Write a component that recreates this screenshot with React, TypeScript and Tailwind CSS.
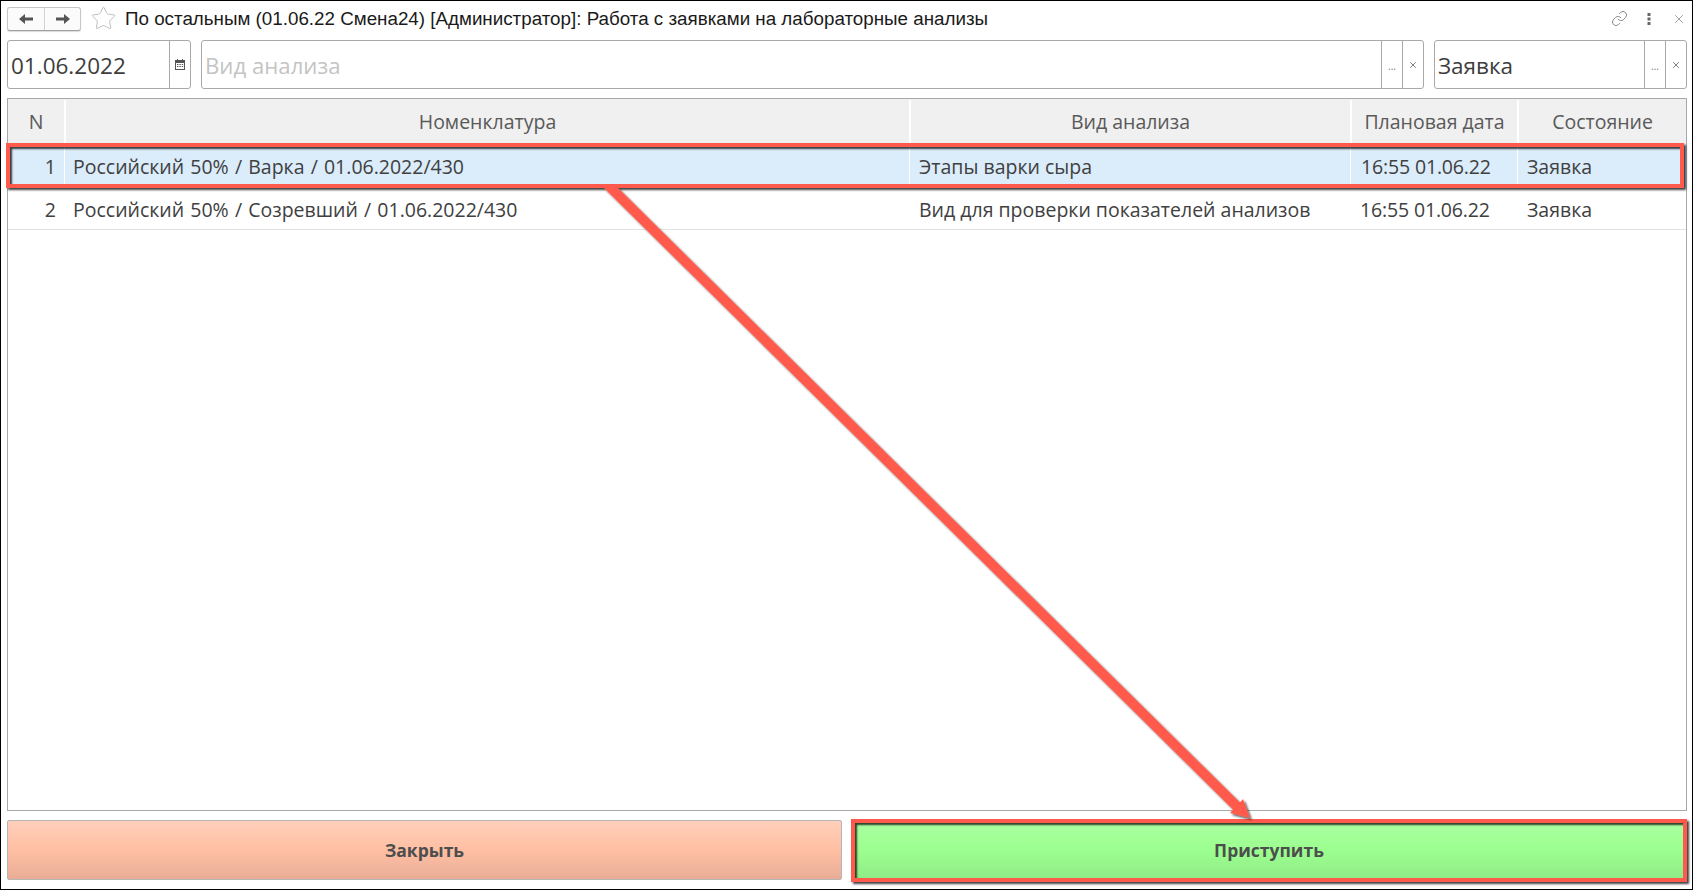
import { Star, Link, X } from "lucide-react";

const GRID = "grid grid-cols-[56px_845px_441px_167px_169px]";

function Field({ text, placeholder, width, trailing, grow }: { text: string; placeholder?: boolean; width?: string; trailing: "date" | "pick"; grow?: boolean }) {
  return (
    <div className={`flex h-[49px] rounded-[3px] border border-[#a9a9a9] bg-white ${width ?? ""} ${grow ? "flex-1" : ""}`}>
      <div className={`flex-1 flex items-center pl-[3px] pt-[2px] ${placeholder ? "text-[22.2px] text-[#c4c4c4]" : "text-[22.5px] text-[#3d3d3d]"}`}>{text}</div>
      {trailing === "date" ? (
        <div className="w-[21px] border-l border-[#a9a9a9] flex items-center justify-center">
          <svg width="10" height="11" viewBox="0 0 10 11" className="text-[#555]">
            <rect x="0.5" y="1.5" width="9" height="9" fill="none" stroke="currentColor" />
            <rect x="0.5" y="1.5" width="9" height="2.5" fill="currentColor" />
            <path d="M2.5 0v2M7.5 0v2" stroke="currentColor" />
            <path d="M2 5.5h1.4M4.4 5.5h1.4M6.8 5.5h1.4M2 7.5h1.4M4.4 7.5h1.4M6.8 7.5h1.4" stroke="currentColor" />
          </svg>
        </div>
      ) : (
        <>
          <div className="w-[21px] border-l border-[#a9a9a9] flex items-center justify-center text-[10px] text-[#777] pt-[3px]">...</div>
          <div className="w-[21px] border-l border-[#a9a9a9] flex items-center justify-center">
            <X size={10} strokeWidth={2} className="text-[#666]" />
          </div>
        </>
      )}
    </div>
  );
}

function Frame({ className }: { className: string }) {
  return (
    <div className={`absolute border-[4px] border-[#ff5a4c] pointer-events-none shadow-[2px_2px_2px_rgba(0,0,0,0.75),inset_2px_2px_2px_rgba(0,0,0,0.75)] ${className}`} />
  );
}

export default function App() {
  return (
    <div className="relative w-[1693px] h-[890px] overflow-hidden bg-white border border-black flex flex-col pl-[6px] pr-[5px] font-['Open_Sans',sans-serif] text-[#404040]">
      {/* Title bar */}
      <div className="h-[39px] flex items-center pb-[4px] shrink-0">
        <div className="flex h-[24px] w-[74px] rounded-[3px] border border-[#c6c6c6] border-b-[#a0a0a0] bg-[#fbfbfb] shadow-[0_1px_1px_rgba(0,0,0,0.15)]">
          <div className="w-[37px] flex items-center justify-center border-r border-[#d4d4d4]">
            <svg width="14" height="10" viewBox="0 0 14 10"><polygon points="0,5 6,0 6,3.5 14,3.5 14,6.5 6,6.5 6,10" fill="#555" /></svg>
          </div>
          <div className="flex-1 flex items-center justify-center">
            <svg width="14" height="10" viewBox="0 0 14 10"><polygon points="14,5 8,0 8,3.5 0,3.5 0,6.5 8,6.5 8,10" fill="#555" /></svg>
          </div>
        </div>
        <Star size={27} strokeWidth={0.8} className="text-[#b8b8b8] ml-[9px]" />
        <div className="ml-[8px] pt-[1px] font-['Liberation_Sans',sans-serif] text-[18.8px] text-[#1a1a1a] whitespace-nowrap">
          По остальным (01.06.22 Смена24) [Администратор]: Работа с заявками на лабораторные анализы
        </div>
        <div className="ml-auto flex items-center text-[#777] pr-[1px]">
          <Link size={17} strokeWidth={1.2} className="mr-[19px]" />
          <svg width="4" height="12" viewBox="0 0 4 12" className="mr-[21px]">
            <rect x="0.5" y="0" width="3" height="3" fill="#666" />
            <rect x="0.5" y="4.5" width="3" height="3" fill="#666" />
            <rect x="0.5" y="9" width="3" height="3" fill="#666" />
          </svg>
          <X size={14} strokeWidth={1.2} />
        </div>
      </div>

      {/* Filters */}
      <div className="flex gap-[10px] shrink-0">
        <Field text="01.06.2022" width="w-[184px]" trailing="date" />
        <Field text="Вид анализа" placeholder trailing="pick" grow />
        <Field text="Заявка" width="w-[253px]" trailing="pick" />
      </div>

      {/* Table */}
      <div className="mt-[9px] h-[713px] shrink-0 border border-[#a9a9a9] flex flex-col text-[19.5px]">
        <div className={`${GRID} h-[45px] bg-[#f0f0f0] text-[#595959] shrink-0 pt-[1px]`}>
          <div className="flex items-center justify-center">N</div>
          <div className="flex items-center justify-center border-l-2 border-white">Номенклатура</div>
          <div className="flex items-center justify-center border-l-2 border-white">Вид анализа</div>
          <div className="flex items-center justify-center border-l-2 border-white">Плановая дата</div>
          <div className="flex items-center justify-center border-l-2 border-white">Состояние</div>
        </div>
        <div className={`${GRID} relative h-[43px] bg-[#dbecfb] shrink-0`}>
          <div className="flex items-center justify-end pr-[8px] pt-[2px]">1</div>
          <div className="flex items-center pl-[8px] pt-[2px] border-l border-white whitespace-nowrap [word-spacing:1.1px]">Российский 50% / Варка / 01.06.2022/430</div>
          <div className="flex items-center pl-[9px] pt-[2px] border-l border-white whitespace-nowrap">Этапы варки сыра</div>
          <div className="flex items-center pl-[10px] pt-[2px] border-l border-white whitespace-nowrap tracking-[-0.15px]">16:55 01.06.22</div>
          <div className="flex items-center pl-[9px] pt-[2px] border-l border-white whitespace-nowrap">Заявка</div>
          <Frame className="left-[-2px] right-[2px] top-[-1px] bottom-[-1px]" />
        </div>
        <div className={`${GRID} h-[43px] border-b border-[#e2e2e2] shrink-0 pt-[3px]`}>
          <div className="flex items-center justify-end pr-[8px]">2</div>
          <div className="flex items-center pl-[9px] whitespace-nowrap [word-spacing:1.1px]">Российский 50% / Созревший / 01.06.2022/430</div>
          <div className="flex items-center pl-[10px] whitespace-nowrap">Вид для проверки показателей анализов</div>
          <div className="flex items-center pl-[10px] whitespace-nowrap tracking-[-0.15px]">16:55 01.06.22</div>
          <div className="flex items-center pl-[10px] whitespace-nowrap">Заявка</div>
        </div>
      </div>

      {/* Buttons */}
      <div className="mt-[9px] flex gap-[9px] h-[60px] shrink-0 text-[17.5px] font-bold text-[#4d4d4d]">
        <button className="w-[835px] rounded-[2px] border border-[#b5b5b5] bg-gradient-to-b from-[#ffcfbb] via-[#ffbfa3] to-[#e9ad97] flex items-center justify-center">Закрыть</button>
        <div className="relative flex-1">
          <button className="w-full h-full rounded-[2px] bg-gradient-to-b from-[#abffa3] via-[#9cff8f] to-[#8fea87] flex items-center justify-center">Приступить</button>
          <Frame className="inset-x-0 top-[-1px] bottom-[-2px] left-0" />
        </div>
      </div>

      {/* Arrow annotation */}
      <svg width="1693" height="890" viewBox="0 0 1693 890" className="absolute left-[-1px] top-[-1px] pointer-events-none">
        <defs>
          <filter id="arrowShadow" x="-5%" y="-5%" width="110%" height="110%">
            <feDropShadow dx="2" dy="2" stdDeviation="1.2" floodColor="#000" floodOpacity="0.65" />
          </filter>
        </defs>
        <polygon
          points="604,188 618,188 1240,802.6 1243,799 1250,818 1230,813 1233,809.4"
          fill="#ff5a4c"
          filter="url(#arrowShadow)"
        />
      </svg>
    </div>
  );
}
